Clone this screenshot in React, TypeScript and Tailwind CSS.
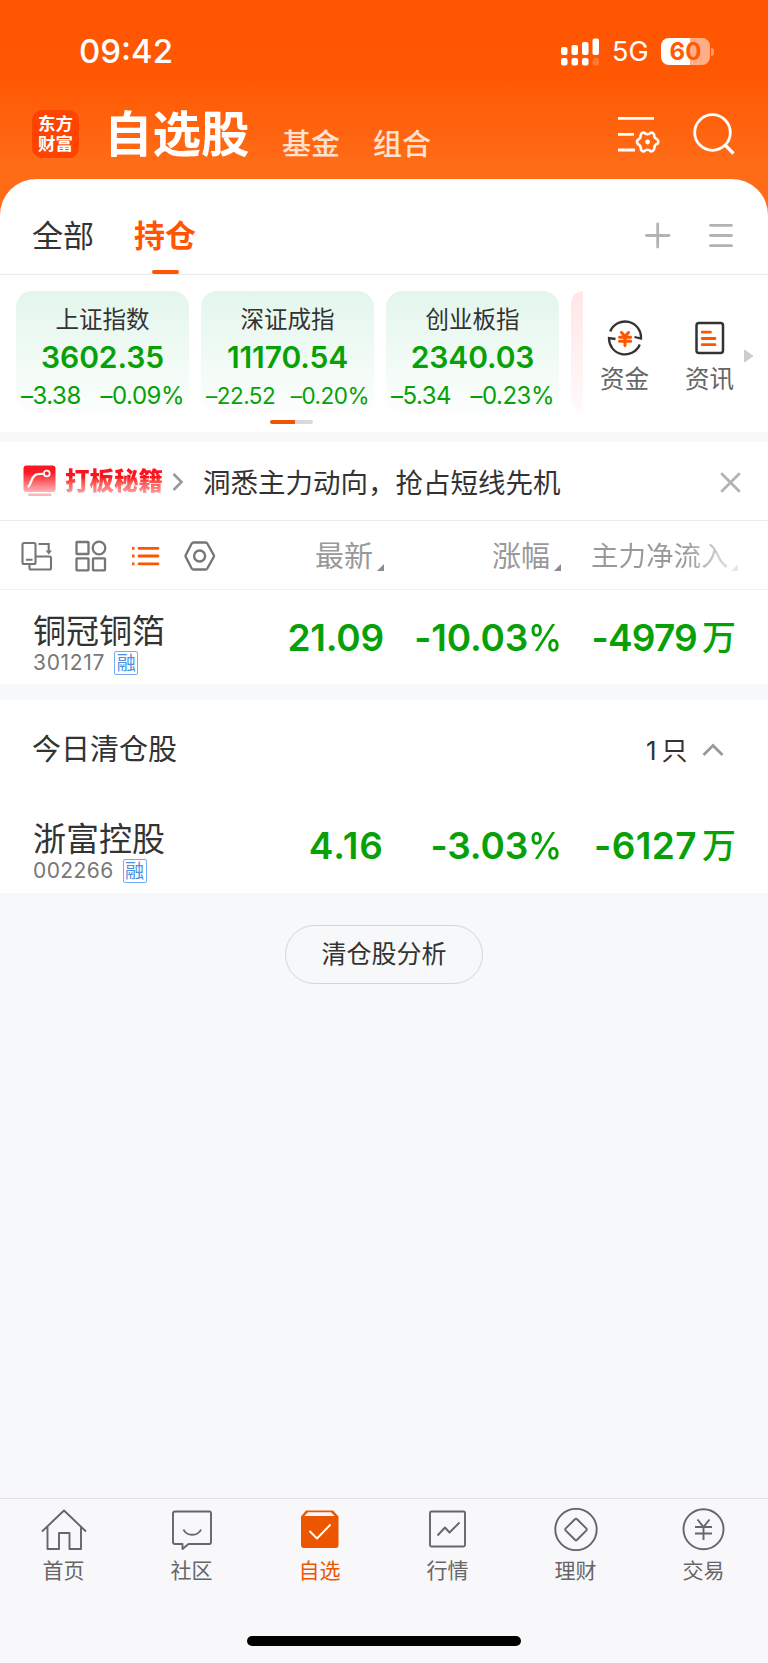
import React from 'react';

const indices = [
  { name: '上证指数', value: '3602.35', change: '–3.38', percent: '–0.09%', size: 'text-[24px] tracking-[-0.5px]' },
  { name: '深证成指', value: '11170.54', change: '–22.52', percent: '–0.20%', size: 'text-[22.5px] tracking-[-0.5px]' },
  { name: '创业板指', value: '2340.03', change: '–5.34', percent: '–0.23%', size: 'text-[24px] tracking-[-0.5px]' },
];

const SignalIcon = () => (
  <svg width="39" height="28" viewBox="0 0 39 28" fill="#fff">
    <rect x="0" y="9" width="6.5" height="8" rx="2" />
    <rect x="10.5" y="7" width="6.5" height="10" rx="2" />
    <rect x="21" y="4" width="6.5" height="13" rx="2" />
    <rect x="31.5" y="0.5" width="6.5" height="16.5" rx="2" />
    <rect x="0" y="20" width="6.5" height="7.5" rx="2" />
    <rect x="10.5" y="20" width="6.5" height="7.5" rx="2" />
    <rect x="21" y="20" width="6.5" height="7.5" rx="2" />
    <rect x="31.5" y="20" width="6.5" height="7.5" rx="2" opacity="0.2" />
  </svg>
);

const FilterIcon = () => (
  <svg width="42" height="38" viewBox="0 0 42 38" fill="none" stroke="#fff" strokeWidth="2.8">
    <path d="M0 2.3H36M0 18.3H16M0 34H17" />
    <path
      d="M24.6 16.8 Q26.2 16.3 27 17.4 Q29.5 18.8 32 17.4 Q33.5 15.8 35.2 17.2 Q36.6 18.3 36.2 20.3 Q36.9 22.4 38.8 23 Q40.6 24.2 40.3 26.4 Q39.8 28.2 37.8 28.6 Q36.2 30 36.4 32.3 Q36 34.6 33.8 35.4 Q32.2 35.6 31.4 34.2 Q29.4 33.2 27.6 34.2 Q26.4 35.8 24.6 35.2 Q22.6 34.2 22.8 31.9 Q22.7 29.8 20.8 28.6 Q18.8 27.6 19 25.6 Q19.2 23.6 21.4 22.8 Q23 21.6 22.6 19.4 Q23 17.4 24.6 16.8Z"
      strokeWidth="2.6"
    />
    <circle cx="29.6" cy="26" r="2.4" fill="#fff" stroke="none" />
  </svg>
);

const SearchIcon = () => (
  <svg width="42" height="42" viewBox="0 0 42 42" fill="none" stroke="#fff" strokeWidth="2.8">
    <circle cx="19.5" cy="19.5" r="17.8" />
    <path d="M31.5 31.5L40.5 40.5" strokeWidth="3.2" />
  </svg>
);

const FundIcon = () => (
  <svg width="36" height="36" viewBox="0 0 36 36" fill="none" stroke="#333" strokeWidth="2.3">
    <path d="M3.2 11.5A16 16 0 0 1 34 18.5L27.5 17" />
    <path d="M32.8 24.5A16 16 0 0 1 2 18L8.5 19" />
    <path d="M14.5 12.5L18 16.5L21.5 12.5M12.5 17.3H23.7M12.5 21.3H23.7M18 17V25.5" stroke="#ff5500" strokeWidth="3" strokeLinecap="round" />
  </svg>
);

const NewsIcon = () => (
  <svg width="30" height="34" viewBox="0 0 30 34" fill="none" stroke="#333" strokeWidth="2.5">
    <rect x="1.5" y="2" width="26.5" height="30" rx="2.5" />
    <path d="M7.2 11.2H15.5M7.2 17.5H20M7.2 23.7H20" stroke="#ff5500" strokeWidth="2.8" strokeLinecap="round" />
  </svg>
);

const PromoIcon = () => (
  <svg width="33" height="32" viewBox="0 0 33 32" fill="none">
    <defs>
      <linearGradient id="promo" x1="0" y1="0" x2="0" y2="1">
        <stop offset="0.25" stopColor="#fc1822" />
        <stop offset="1" stopColor="#ffb4b7" />
      </linearGradient>
    </defs>
    <rect x="0.5" y="0.5" width="32" height="26.5" rx="3" fill="url(#promo)" />
    <path d="M5.5 21.5C9 18 8 10.5 14.5 9.2L19.5 8.8" stroke="#fff" strokeWidth="2.3" strokeLinecap="round" />
    <circle cx="23.8" cy="8.5" r="2.9" stroke="#fff" strokeWidth="1.8" />
    <rect x="5" y="28.5" width="23.5" height="2.5" rx="1" fill="#ffb5b7" />
  </svg>
);

const toolIcons = [
  <svg key="rotate" width="32" height="30" viewBox="0 0 32 30" fill="none" stroke="#767676" strokeWidth="2.1">
    <rect x="1.5" y="2" width="13" height="21" rx="1.5" />
    <path d="M5 18.8H11.5M17.5 3H27.7V12M15 15.5H28.5Q30 15.5 30 17V27Q30 28.5 28.5 28.5H10Q8.5 28.5 8.5 27V23.5" />
    <path d="M24.6 9.5H31L27.8 13.5Z" fill="#767676" stroke="none" />
  </svg>,
  <svg key="grid" width="32" height="32" viewBox="0 0 32 32" fill="none" stroke="#767676" strokeWidth="2.3">
    <rect x="1.5" y="2" width="12" height="12" rx="0.5" />
    <circle cx="24" cy="8" r="6.3" />
    <rect x="1.5" y="18.3" width="12" height="12" rx="0.5" />
    <rect x="18" y="18.3" width="12" height="12" rx="0.5" />
  </svg>,
  <svg key="list" width="29" height="22" viewBox="0 0 29 22" fill="none" stroke="#ff5500" strokeWidth="2.8">
    <path d="M8 3.3H27M8 11H27M8 18.8H27" strokeLinecap="round" />
    <path d="M1 3.3H3.5M1 11H3.5M1 18.8H3.5" />
  </svg>,
  <svg key="hex" width="32" height="30" viewBox="0 0 32 30" fill="none" stroke="#767676" strokeWidth="2.4">
    <path d="M9.5 1.5H21.5Q22.7 1.5 23.3 2.5L29.7 14Q30.2 15 29.7 16L23.3 27.5Q22.7 28.5 21.5 28.5H9.5Q8.3 28.5 7.7 27.5L1.8 16Q1.3 15 1.8 14L7.7 2.5Q8.3 1.5 9.5 1.5Z" />
    <circle cx="15.6" cy="15" r="5.5" />
  </svg>,
];

const navItems = [
  {
    label: '首页',
    icon: <path d="M1 23.5L23 2.5L45 23.5M6.5 19V41H18V25H28.5V41H40V19" />,
  },
  {
    label: '社区',
    icon: (
      <>
        <path d="M6 3.5H40.5Q42 3.5 42 5.5V34Q42 36 40.5 36H19.5L13.5 41V36H6Q4 36 4 34V5.5Q4 3.5 6 3.5Z" />
        <path d="M14.5 21.5C17.5 28.5 29 28.5 32 21.5" />
      </>
    ),
  },
  {
    label: '自选',
    active: true,
    icon: (
      <>
        <path d="M9 2.5H36L41.5 8.5V37Q41.5 40 38.5 40H7Q4 40 4 37V8.5Z" fill="#ec5600" stroke="none" />
        <path d="M11 4.2H34L37.7 8H7.3Z" fill="#f8f8fb" stroke="none" />
        <path d="M12.5 23L20 30.5L33.5 16.5" stroke="#fff" />
      </>
    ),
  },
  {
    label: '行情',
    icon: (
      <>
        <rect x="5" y="3.5" width="35" height="35" rx="1.5" />
        <path d="M12.5 27.5L20 19.5L24.5 24.5L34.5 14.5" />
      </>
    ),
  },
  {
    label: '理财',
    icon: (
      <>
        <circle cx="23" cy="21.5" r="20.7" />
        <rect x="15" y="13.5" width="16" height="16" rx="1.5" transform="rotate(45 23 21.5)" />
      </>
    ),
  },
  {
    label: '交易',
    icon: (
      <>
        <circle cx="22.5" cy="21.3" r="20" />
        <path d="M16.5 11.5L22.5 19L28.5 11.5M14 19H31M14 25.5H31M22.5 19V32" />
      </>
    ),
  },
];

const stocks = {
  held: {
    name: '铜冠铜箔',
    code: '301217',
    price: '21.09',
    percent: '-10.03',
    flow: '-4979',
    codeClass: 'tracking-[0.7px]',
    priceClass: 'tracking-[-0.2px]',
    flowClass: 'tracking-[-0.8px]',
  },
  cleared: {
    name: '浙富控股',
    code: '002266',
    price: '4.16',
    percent: '-3.03',
    flow: '-6127',
    codeClass: 'tracking-[0.4px]',
    priceClass: 'tracking-[1px]',
    flowClass: 'tracking-[0.4px]',
  },
};

const SortMark = ({ className = '' }: { className?: string }) => (
  <svg className={className} width="7" height="7" viewBox="0 0 7 7">
    <path d="M7 0V7H0Z" fill="#8a8a90" />
  </svg>
);

const StockRow = ({ stock }: { stock: typeof stocks.held }) => (
  <div className="grid h-[94px] grid-cols-[224px_160px_177px_175px] text-[37px] font-semibold text-[#07a107]">
    <div className="pt-[22px] pl-[33px] font-normal">
      <div className="h-[38px] text-[33px] leading-[38px] text-[#333]">{stock.name}</div>
      <div className="flex h-[26px] items-center">
        <span className={`text-[21px] text-[#777] ${stock.codeClass}`}>{stock.code}</span>
        <span className="ml-[9px] flex h-6 w-6 items-center justify-center rounded-[2px] border-[1.5px] border-[#73aef0] text-[19px] leading-none text-[#4a90e0]">
          融
        </span>
      </div>
    </div>
    <div className={`pt-[25px] text-right leading-[46px] ${stock.priceClass}`}>{stock.price}</div>
    <div className="pt-[25px] text-right leading-[46px] tracking-[-0.2px]">
      {stock.percent}
      <span className="inline-block w-[33px] origin-left scale-x-[0.93] font-medium">%</span>
    </div>
    <div className="flex items-start justify-end pt-[25px] leading-[46px]">
      <span className={stock.flowClass}>{stock.flow}</span>
      <span className="ml-[5px] text-[34px] font-medium">万</span>
    </div>
  </div>
);

const App = () => {
  return (
    <div className="flex h-[1663px] w-[768px] flex-col overflow-hidden bg-[#f7f8fa] font-['Inter','Noto_Sans_CJK_SC',sans-serif]">
      <header className="h-[220px] shrink-0 bg-[linear-gradient(180deg,#ff5500_0px,#ff5702_75px,#ff6c18_165px,#ff6c18_220px)] text-white">
        <div className="flex h-[102px] items-center pt-[1px] pl-[79px] text-[33px] font-medium">
          <span className="w-[482px] pt-[1px]">09:42</span>
          <SignalIcon />
          <span className="ml-[12px] w-[49px] pt-[2px] text-[27px] font-normal">5G</span>
          <div className="flex h-[27px] w-[49px] items-center justify-center rounded-[8px] bg-[linear-gradient(90deg,#fff_60%,#ffae86_60%)] text-[24px] font-bold text-[#ff5a08]">
            60
          </div>
          <div className="ml-[1px] h-2 w-[3px] rounded-r-full bg-[#ff9a6a]" />
        </div>
        <div className="flex h-[66px] pl-[32px]">
          <div className="mt-[8px] flex h-[48px] w-[47px] flex-col items-center justify-center rounded-[10px] bg-[#ff4400] text-[17.5px] leading-[20px] font-bold">
            <span>东方</span>
            <span>财富</span>
          </div>
          <h1 className="ml-[25px] w-[178px] text-[48.5px] leading-[65px] font-bold">自选股</h1>
          <span className="mt-[20px] w-[91px] text-[29px] leading-[46px] font-medium text-[#ffe1d0]">基金</span>
          <span className="mt-[20px] w-[245px] text-[29px] leading-[46px] font-medium text-[#ffe1d0]">组合</span>
          <div className="mt-[14px] w-[75px]"><FilterIcon /></div>
          <div className="mt-[11px]"><SearchIcon /></div>
        </div>
      </header>

      <main className="-mt-[41px] shrink-0">
        <div className="flex h-[96px] items-center rounded-t-[36px] border-b border-[#ebebee] bg-white pt-[17px] pl-[32px]">
          <span className="mt-[2px] mr-[40px] text-[31px] text-[#333]">全部</span>
          <div className="relative mt-[2px] mr-[448px] text-[31px] font-bold text-[#ff5500]">
            持仓
            <div className="absolute -bottom-[15px] left-[18px] h-1 w-[27px] rounded-full bg-[#ff5500]" />
          </div>
          <svg width="106" height="27" viewBox="0 0 106 27" fill="none" stroke="#b3b3b3" strokeWidth="2.8" strokeLinecap="round">
            <path d="M2.5 13.5H25M13.7 2V25M66.5 3.3H87.5M66.5 13.5H87.5M66.5 23.7H87.5" />
          </svg>
        </div>

        <section className="h-[157px] bg-white pt-[16px]">
          <div className="flex h-[121px] pl-[16px]">
            {indices.map((item) => (
              <div key={item.name} className="mr-[12px] w-[173px] rounded-[16px] bg-gradient-to-b from-[#e3f6ec] to-[#fcfefd] text-center text-[#07a107]">
                <div className="mt-[11px] h-[35px] text-[23.5px] leading-[36px] text-[#333]">{item.name}</div>
                <div className="h-[40px] text-[30px] leading-[41px] font-semibold tracking-[-0.1px]">{item.value}</div>
                <div className={`flex h-[37px] items-center justify-between px-[5px] leading-[37px] ${item.size}`}>
                  <span>{item.change}</span>
                  <span>{item.percent}</span>
                </div>
              </div>
            ))}
            <div className="w-[12px] rounded-l-[14px] bg-gradient-to-b from-[#ffe6e8] to-[#fffafa]" />
            <div className="ml-[17px] flex w-[49px] flex-col items-center pt-[29px] text-[24.5px] leading-[40px] text-[#666]">
              <FundIcon />
              <span className="mt-[3px]">资金</span>
            </div>
            <div className="ml-[36px] flex w-[49px] flex-col items-center pt-[30px] text-[24.5px] leading-[40px] text-[#666]">
              <NewsIcon />
              <span className="mt-[4px]">资讯</span>
            </div>
            <svg className="mt-[58px] ml-[10px]" width="10" height="14" viewBox="0 0 10 14">
              <path d="M0.5 1L9 7L0.5 13Z" fill="#ccc" stroke="#ccc" strokeLinejoin="round" />
            </svg>
          </div>
          <div className="mt-[8px] ml-[270px] h-1 w-[43px] rounded-full bg-[linear-gradient(90deg,#ec5600_58%,#d8d9df_58%)]" />
        </section>

        <section className="mt-[10px] flex h-[79px] items-center border-b border-[#ebebee] bg-white pl-[23px]">
          <PromoIcon />
          <span className="ml-[9px] w-[107px] bg-gradient-to-b from-[#fa1420] from-40% to-[#ff9ea1] to-85% bg-clip-text text-[24.5px] font-black text-transparent">打板秘籍</span>
          <svg className="mt-[2px]" width="12" height="20" viewBox="0 0 12 20" fill="none" stroke="#999" strokeWidth="2.6">
            <path d="M1.5 2L9.5 10L1.5 18" />
          </svg>
          <span className="mt-[5px] ml-[19px] w-[517px] text-[27.5px] text-[#333]">洞悉主力动向，抢占短线先机</span>
          <svg className="mt-[2px]" width="21" height="21" viewBox="0 0 21 21" stroke="#b3b3b3" strokeWidth="2.8" strokeLinecap="round">
            <path d="M2 2L19 19M19 2L2 19" />
          </svg>
        </section>

        <section className="grid h-[69px] grid-cols-[224px_160px_177px_177px] items-center border-b border-[#f1f1f3] bg-white pt-[1px] text-[29px] text-[#999]">
          <div className="grid grid-cols-[54px_56px_53px_32px] items-center pl-[21px]">{toolIcons}</div>
          <div className="flex items-center justify-end pt-[3px]">
            最新
            <SortMark className="mt-[20px] ml-[4px]" />
          </div>
          <div className="flex items-center justify-end pt-[3px]">
            涨幅
            <SortMark className="mt-[20px] ml-[4px]" />
          </div>
          <div className="flex items-center justify-end bg-gradient-to-r from-[#999] from-70% to-[#eee] bg-clip-text pt-[3px] text-[27.5px] text-transparent">
            主力净流入
            <SortMark className="mt-[20px] ml-[2.5px] opacity-20" />
          </div>
        </section>

        <section className="bg-white">
          <StockRow stock={stocks.held} />
        </section>

        <section className="mt-[16px] bg-white">
          <div className="flex h-[98px] items-center pt-[2px] pl-[32px] text-[#333]">
            <span className="w-[614px] text-[29px]">今日清仓股</span>
            <span className="w-[56px] text-[26px]">1<span className="ml-[5px]">只</span></span>
            <svg className="-mt-[1px]" width="22" height="14" viewBox="0 0 22 14" fill="none" stroke="#999" strokeWidth="2.8">
              <path d="M1.5 12L11 2.5L20.5 12" />
            </svg>
          </div>
          <StockRow stock={stocks.cleared} />
          <div className="h-[1px]" />
        </section>

        <button className="mx-auto mt-[32px] flex h-[59px] w-[198px] items-center justify-center rounded-full border border-[#d4d5d8] pt-[1px] text-[25px] text-[#333]">
          清仓股分析
        </button>
      </main>

      <nav className="mt-auto h-[165px] shrink-0 border-t border-[#dfdfe3] bg-[#f8f8fb]">
        <div className="grid h-[137px] grid-cols-6 pt-[9px]">
          {navItems.map((item) => (
            <div key={item.label} className={`flex flex-col items-center text-[21px] leading-[34px] ${item.active ? 'text-[#ec5600]' : 'text-[#666]'}`}>
              <svg width="46" height="43" viewBox="0 0 46 43" fill="none" stroke="currentColor" strokeWidth="1.9" strokeLinejoin="round">
                {item.icon}
              </svg>
              <span className="mt-[3px] -ml-[1px]">{item.label}</span>
            </div>
          ))}
        </div>
        <div className="mx-auto h-[10px] w-[274px] rounded-full bg-black" />
      </nav>
    </div>
  );
};

export default App;
